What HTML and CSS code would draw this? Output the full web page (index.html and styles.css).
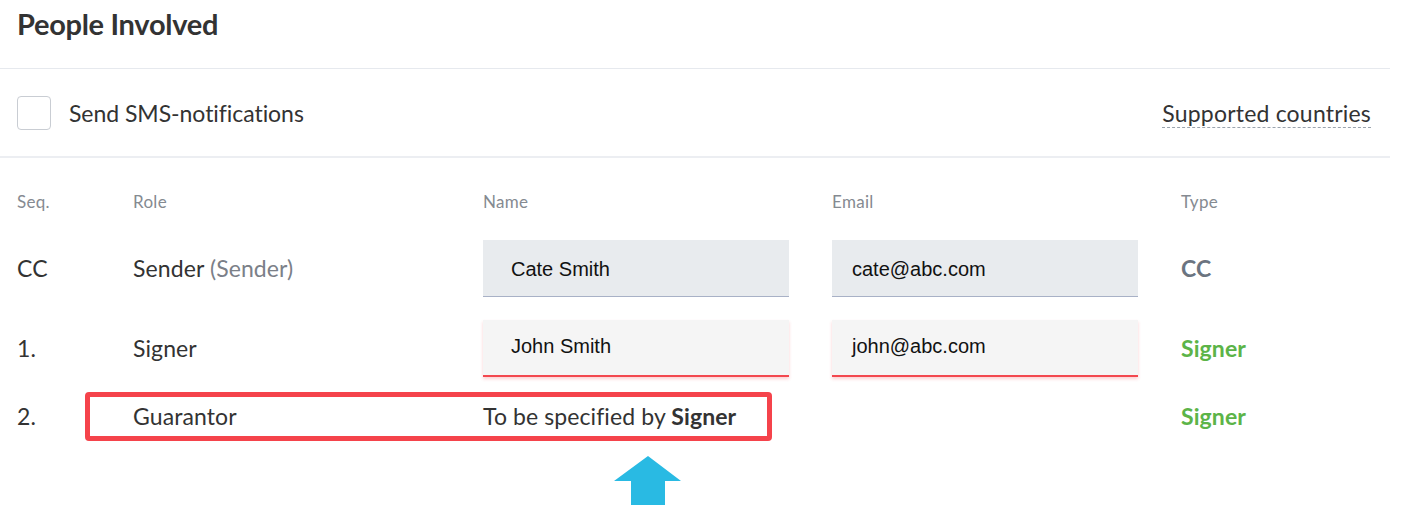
FILE: index.html
```html
<!DOCTYPE html>
<html>
<head>
<meta charset="utf-8">
<link rel="stylesheet" href="styles.css">
</head>
<body>
<div class="panel">
  <div class="title-bar"><h2 class="title">People Involved</h2></div>
  <div class="sms-bar">
    <label class="sms">
      <span class="checkbox"></span>
      <span class="sms-label">Send SMS-notifications</span>
    </label>
    <a class="supported">Supported countries</a>
  </div>
  <div class="table">
    <div class="row head">
      <div>Seq.</div><div>Role</div><div>Name</div><div>Email</div><div>Type</div>
    </div>
    <div class="row r1">
      <div>CC</div>
      <div>Sender <span class="muted">(Sender)</span></div>
      <div><div class="field locked">Cate Smith</div></div>
      <div><div class="field locked email">cate@abc.com</div></div>
      <div class="type cc">CC</div>
    </div>
    <div class="row r2">
      <div>1.</div>
      <div>Signer</div>
      <div><div class="field invalid">John Smith</div></div>
      <div><div class="field invalid email">john@abc.com</div></div>
      <div class="type signer">Signer</div>
    </div>
    <div class="row r3">
      <div>2.</div>
      <div>Guarantor</div>
      <div class="spec">To be specified by <b>Signer</b></div>
      <div></div>
      <div class="type signer">Signer</div>
      <span class="highlight"></span>
      <svg class="arrow" width="68" height="50" viewBox="0 0 68 50"><path d="M34 0 L67 25 L51 25 L51 50 L17 50 L17 25 L0 25 Z" fill="#29bae3"/></svg>
    </div>
  </div>
</div>
</body>
</html>
```
FILE: styles.css
```css
* { box-sizing: border-box; }
html, body { margin: 0; padding: 0; background: #fff; }
body {
  font-family: "Source Sans Pro", Lato, "Open Sans", sans-serif;
  color: #333;
  width: 1401px;
  height: 505px;
  overflow: hidden;
}
.panel { width: 1390px; }
.title-bar {
  height: 69px;
  border-bottom: 1px solid #e6e9ee;
  padding: 5px 0 0 17px;
}
.title {
  margin: 0;
  font-size: 29px;
  font-weight: 700;
  letter-spacing: -0.3px;
  line-height: 38px;
  color: #333;
}
.sms-bar {
  height: 89px;
  border-bottom: 2px solid #eceef2;
  display: flex;
  align-items: center;
  justify-content: space-between;
  padding: 0 19px 0 17px;
}
.sms { display: flex; align-items: center; gap: 18px; }
.checkbox {
  width: 34px; height: 34px;
  border: 1px solid #c9cdd3;
  border-radius: 4px;
  background: #fff;
}
.sms-label { font-size: 23px; letter-spacing: -0.05px; }
.supported {
  font-size: 23px;
  color: #333;
  border-bottom: 1px dashed #9aa3ad;
  line-height: 26px;
  padding-bottom: 1px;
  margin-top: 2px;
  letter-spacing: 0.2px;
}
.table { padding-left: 17px; }
.row {
  display: grid;
  grid-template-columns: 116px 350px 349px 349px 1fr;
  align-items: center;
  font-size: 23px;
  letter-spacing: 0.1px;
}
.head { height: 44px; margin-top: 21px; font-size: 17px; color: #858a91; letter-spacing: 0.3px; }
.r1 { height: 58px; margin-top: 16px; }
.r2 { height: 58px; margin-top: 22px; }
.r3 { height: 48px; margin-top: 15px; position: relative; }
.muted { color: #7b8088; }
.field {
  width: 306px;
  height: 57px;
  padding-left: 28px;
  display: flex;
  align-items: center;
  font-family: "Liberation Sans", Arial, sans-serif;
  font-size: 20px;
  letter-spacing: 0;
  color: #111;
}
.field.email { padding-left: 20px; }
.field.locked { background: #e8ebee; border-bottom: 1px solid #a8b1c6; padding-top: 4px; }
.field.invalid {
  background: #f5f5f5;
  border-bottom: 2px solid #f3484f;
  box-shadow: 0 2px 3px rgba(243, 72, 79, 0.25);
  padding-bottom: 1px;
}
.type { font-weight: 700; }
.type.cc { color: #6b7480; }
.type.signer { color: #5cb448; }
.spec b { font-weight: 700; color: #333; }
.highlight {
  position: absolute;
  left: 68px;
  top: 0;
  width: 687px;
  height: 49px;
  border: 5px solid #f5434b;
  border-radius: 4px;
}
.arrow {
  position: absolute;
  left: 597px;
  top: 64px;
}
```
